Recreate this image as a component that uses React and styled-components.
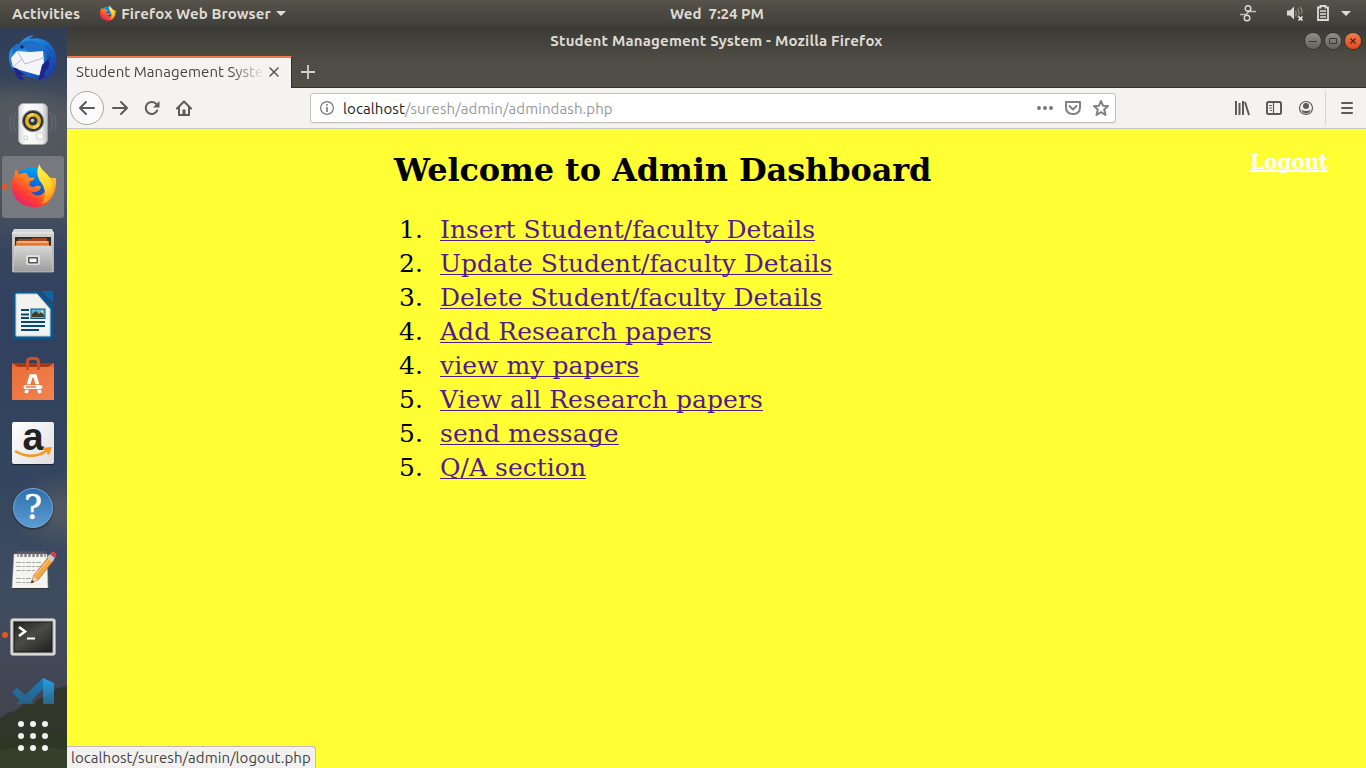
import React from 'react';
import styled, { createGlobalStyle } from 'styled-components';

const Global = createGlobalStyle`
  * { box-sizing: border-box; }
  body { margin: 0; overflow: hidden; }
`;
const ui = '"Ubuntu", "Noto Sans", "Open Sans", sans-serif';

const Desktop = styled.div`
  width: 1366px; height: 768px; display: flex; flex-direction: column;
  overflow: hidden; font-family: ${ui};
`;
const TopBar = styled.header`
  height: 27px; flex: none; display: grid; grid-template-columns: 1fr auto 1fr;
  align-items: center; padding: 0 15px 0 12px; color: #dfdbd2;
  background: linear-gradient(#57534a, #3f3e39);
`;
const BarGroup = styled.div`
  display: flex; align-items: center; justify-content: ${p => p.$end ? 'flex-end' : 'flex-start'};
  padding-bottom: ${p => p.$end ? 1 : 0}px;
`;
const Label = styled.span`
  font-size: ${p => p.$size || 15}px; font-weight: ${p => p.$bold ? 700 : 400};
  letter-spacing: ${p => p.$track || 0}px; color: ${p => p.$color || '#dfdbd2'};
  line-height: 20px; white-space: pre; display: block; margin: 0 ${p => p.$right || 0}px 0 ${p => p.$left || 0}px;
`;
const Icon = styled.svg`
  display: block; flex: none; width: ${p => p.$w || 16}px; height: ${p => p.$h || p.$w || 16}px;
  margin-left: ${p => p.$left || 0}px; overflow: visible;
`;
const Workspace = styled.div`flex: 1; display: flex; min-height: 0;`;
const Dock = styled.nav`
  width: 67px; flex: none; display: flex; flex-direction: column; position: relative;
  background:
    radial-gradient(ellipse 75px 38px at 15px 95px, #53595f 0 45%, #53595f00),
    radial-gradient(ellipse 50px 40px at 62px 485px, #4f5761 0 20%, #4f576100),
    linear-gradient(#303e58 0, #35425a 45px, #51575d 90px, #50575e 160px, #35445f 225px, #31415e 300px, #34455f 450px, #3e4c60 560px, #42495a 620px, #42444f 680px, #3e4249 741px);
`;
const Hill = styled.svg`position: absolute; left: 0; bottom: 0; width: 67px; height: 82px;`;
const DockItem = styled.div`
  height: ${p => p.$h || 64}px; flex: none; display: flex; align-items: center; justify-content: center;
  position: relative; overflow: ${p => p.$clip ? 'hidden' : 'visible'}; padding: ${p => p.$drop || 0}px 1px 0 0;
`;
const ActiveTile = styled.div`
  width: 62px; height: 62px; border-radius: 3px; background: #767a7e; position: absolute; left: 2px; top: 1px;
`;
const RunningDot = styled.i`
  position: absolute; left: 2px; top: calc(50% - 3px); width: 6px; height: 6px; border-radius: 50%; background: #e95420;
`;
const Art = styled.svg`display: block; width: 50px; height: 50px; position: relative; overflow: visible;`;

const Browser = styled.main`flex: 1; min-width: 0; display: flex; flex-direction: column; position: relative; background: #ffff33;`;
const TitleBar = styled.div`
  height: 29px; flex: none; display: grid; grid-template-columns: 1fr auto 1fr; align-items: center;
  padding: 0 5px 1px 5px; background: linear-gradient(#3b3a36, #4c4a43);
`;
const WinButtons = styled.div`display: flex; justify-content: flex-end; gap: 4px;`;
const WinButton = styled.div`
  width: 16px; height: 16px; border-radius: 50%; display: grid; place-items: center;
  background: ${p => p.$close ? 'linear-gradient(#f37a52, #df4a18)' : 'linear-gradient(#908e88, #64625b)'};
  box-shadow: 0 0 0 1px #35342f;
`;
const TabStrip = styled.div`
  height: 32px; flex: none; display: flex; background: linear-gradient(#4c4a43, #504d46 6px);
`;
const Tab = styled.div`
  width: 225px; border-right: 1px solid #2e2d29; border-top: 2px solid #f07746; background: #f4f3f2;
  display: flex; align-items: center; padding: 0 0 2px 9px;
`;
const TabTitle = styled.div`
  width: 188px; overflow: hidden; -webkit-mask-image: linear-gradient(90deg, #000 155px, transparent 188px);
  mask-image: linear-gradient(90deg, #000 155px, transparent 188px);
`;
const StripRest = styled.div`flex: 1; display: flex; align-items: center; padding-left: 9px; border-bottom: 1px solid #33322e;`;
const Toolbar = styled.div`
  height: 41px; flex: none; background: #f4f3f2; border-bottom: 1px solid #c6c4c1;
  display: flex; align-items: center; padding-left: 3px;
`;
const BackButton = styled.div`
  width: 34px; height: 34px; border-radius: 50%; border: 1px solid #aaa8a5; background: #fbfbfb;
  display: grid; place-items: center;
`;
const UrlBar = styled.div`
  width: 806px; height: 30px; margin-left: 118px; border: 1px solid #c4c1bd; border-radius: 3px; background: #fff;
  display: flex; align-items: center; padding-left: 8px; box-shadow: 0 1px 1px #0000000d;
`;
const UrlText = styled.div`flex: 1; display: flex; margin-left: 8px; padding-top: 1px;`;
const Divider = styled.div`width: 1px; height: 34px; background: #d6d4d1; margin-left: 11px;`;

const Page = styled.section`
  flex: 1; background: #ffff33; position: relative; font-family: "DejaVu Serif", serif; padding: 21px 38px 0 327px;
  display: flex; justify-content: space-between; align-items: flex-start;
`;
const Heading = styled.h1`margin: 0; font-size: 32px; line-height: 40px; font-weight: 700; letter-spacing: -0.12px; color: #000; white-space: nowrap;`;
const Menu = styled.ol`list-style: none; margin: 23px 0 0; padding: 0 0 0 5px; font-size: 25px;`;
const MenuRow = styled.li`height: 34px; line-height: 34px; display: flex; color: #000;`;
const MenuNumber = styled.span`width: 41px;`;
const VisitedLink = styled.a`
  color: #551a8b; text-decoration: underline; text-decoration-thickness: 1px; text-underline-offset: 2px;
  text-decoration-skip-ink: none; white-space: nowrap; letter-spacing: ${p => p.$track || 0}px;
`;
const Logout = styled.a`
  color: #fff; font-weight: 700; font-size: 20px; line-height: 24px; letter-spacing: -0.1px;
  text-decoration: underline; text-decoration-skip-ink: none;
`;
const Status = styled.div`
  position: absolute; left: 0; bottom: 0; width: 249px; height: 22px; background: #f2f1f0; padding: 1px 0 0 4px;
  border: solid #bdbbc0; border-width: 1px 1px 0 0; border-top-right-radius: 4px;
`;

const FirefoxShape = () => (
  <>
    <defs>
      <linearGradient id="ffo" x1=".9" y1="0" x2=".1" y2="1"><stop offset="0" stopColor="#ffd43b" /><stop offset=".4" stopColor="#ff8a1e" /><stop offset=".7" stopColor="#ff3b35" /><stop offset="1" stopColor="#d9148c" /></linearGradient>
      <linearGradient id="ffy" x1=".3" y1="0" x2=".6" y2="1"><stop offset="0" stopColor="#fff04a" /><stop offset=".6" stopColor="#ffd42b" /><stop offset="1" stopColor="#ff8c1f" /></linearGradient>
      <linearGradient id="ffb" x1=".6" y1="0" x2=".4" y2="1"><stop offset="0" stopColor="#00a4f4" /><stop offset=".5" stopColor="#0966dc" /><stop offset="1" stopColor="#373083" /></linearGradient>
    </defs>
    <circle cx="25" cy="24" r="19.500" fill="url(#ffb)" />
    <path d="M8 6c0 3 1 5 3 6 3-2 6-2 8-1 0 2 1 4 3 4h4c1 1 0 3-4 4l-1 4c2 2 4 3 7 1 3-1 6 0 5 2-2 4-6 5-10 4 3 4 8 5 12 2 6-4 7-10 5-17l9 1c1 17-8 30-21 30C11 46 3 35 3 24c0-7 1-9 3-11 0-3 0-5 2-7z" fill="url(#ffo)" />
    <path d="M32 1c0 4 3 6 7 10 8 8 9 17 5 24-3 5-7 7-10 7 5-7 4-15 0-21-5-6-6-14-2-20z" fill="url(#ffy)" />
  </>
);

const Thunderbird = () => (
  <Art viewBox="0 0 50 50">
    <defs><linearGradient id="tb" x1="0" y1="0" x2="1" y2="1"><stop offset="0" stopColor="#39a8e9" /><stop offset=".5" stopColor="#1672d4" /><stop offset="1" stopColor="#202a8c" /></linearGradient></defs>
    <path d="M11 10C16 4 20 2 26 1l-5 4c9-2 17 0 22 6 4 6 6 11 5 19-1 7-5 13-12 17l1-4-8 2L8 40C2 34-1 24 2 17c2-4 5-6 9-7z" fill="url(#tb)" />
    <path d="M11 10c5-4 12-5 19-1 8 5 11 12 7 22l-5-2 2-10-13-2-6-4-6 3-4 4c-2-3-1-6 3-10z" fill="#1d6fc8" />
    <path d="M3 24l6-7 13 1 13-1 1 12-3 13L5 34z" fill="#f4f5f8" /><path d="M9 17l8 13 18-6M5 33l9-8" fill="none" stroke="#b7bdc8" />
    <path d="M4 33l4 8c1 3 4 5 8 5l-3-5 5 0-10-7zM34 31l8-8-1 9-5 8 1 3-7 4z" fill="#21268a" />
    <circle cx="14" cy="13" r="1.8" fill="#102a52" />
    <path d="M37 11l8 9m-8-4 8 10m-6-4 5 11" stroke="#0f51af" fill="none" />
  </Art>
);
const Rhythmbox = () => (
  <Art viewBox="0 0 50 50">
    <defs><linearGradient id="spk"><stop stopColor="#d5d6d6" /><stop offset=".25" stopColor="#fff" /><stop offset=".8" stopColor="#eee" /><stop offset="1" stopColor="#bbb" /></linearGradient></defs>
    <path d="M8 13q-5 10 0 20M4 15q-4 8 0 17M42 13q5 10 0 20M46 15q4 8 0 17" stroke="#6383a4" strokeOpacity=".5" fill="none" />
    <rect x="10.500" y="4.500" width="29" height="41" rx="5" fill="url(#spk)" stroke="#aaa" strokeWidth=".6" />
    <circle cx="25" cy="22" r="11" fill="#777" /><circle cx="25" cy="22" r="10" fill="#292b2e" /><circle cx="25" cy="22" r="8" fill="#dfb41c" />
    <path d="M25 22L19 17a8 8 0 0 1 7-3zm0 0 7 4a8 8 0 0 1-7 4z" fill="#f3d453" /><circle cx="25" cy="22" r="4.500" fill="#333940" /><circle cx="24.500" cy="21.500" r="1.800" fill="#c4c8cb" />
    <circle cx="32" cy="37" r="3.500" fill="#fff" stroke="#ccc" /><rect x="16" y="37" width="3.500" height="3.500" fill="none" stroke="#d2d2d2" />
  </Art>
);
const Files = () => (
  <Art viewBox="0 0 50 50">
    <defs><linearGradient id="cab" x2="0" y2="1"><stop stopColor="#d8d8d6" /><stop offset="1" stopColor="#9b9c9b" /></linearGradient></defs>
    <path d="M6 3h38l2 4v39H4V7z" fill="url(#cab)" /><path d="M4 7h42" stroke="#eee" />
    <rect x="7" y="11" width="36" height="10" fill="#302d2b" /><path d="M10 13h13l1-1h15v9H10z" fill="#99481f" /><path d="M8 15h33v6H8z" fill="#e87733" /><path d="M9 16h31" stroke="#ffe1bd" />
    <path d="M7 20h36l2 26H5z" fill="url(#cab)" stroke="#dddddb" strokeWidth=".6" /><rect x="18" y="29" width="14" height="10" rx="2" fill="#dfdfdf" /><rect x="20" y="31" width="10" height="6.500" rx="1" fill="#555" /><rect x="21.500" y="32.500" width="7" height="3.500" fill="#f6f6f6" />
  </Art>
);
const Writer = () => (
  <Art viewBox="0 0 50 50">
    <path d="M6 1h24l15 15v31q0 2-2 2H7q-2 0-2-2V3q0-2 1-2z" fill="#065a91" /><path d="M33 1h12v12z" fill="#0a65a5" /><path d="M8 4h21l13 15v27H8z" fill="#f2f2f1" stroke="#ccc" />
    <path d="M13 20h8M13 24.500h8M13 28h8M13 32h24M13 36h24M13 40h18" stroke="#064a78" strokeWidth="1.8" /><rect x="23" y="19" width="14" height="9.500" fill="#58b7e5" stroke="#075588" /><path d="M24 27v-3l4-3 3 3 2-2 3 3v2z" fill="#443b2b" /><circle cx="34" cy="21.500" r="1.300" fill="#ffd43b" />
  </Art>
);
const Software = () => (
  <Art viewBox="0 0 50 50">
    <defs><linearGradient id="bag" x2="1" y2="1"><stop stopColor="#ec6d38" /><stop offset="1" stopColor="#f08551" /></linearGradient></defs>
    <path d="M4 9h42v4H4z" fill="#a63a15" /><path d="M4 9l6 4H4zm42 0-6 4h6z" fill="#e96531" /><rect x="4" y="13" width="42" height="33" fill="url(#bag)" />
    <path d="M19.500 16V8q0-3.500 3.500-3.500h4q3.500 0 3.500 3.500v8" fill="none" stroke="#cc5028" strokeWidth="3" />
    <path d="M18 39l5-17h4l5 17" fill="none" stroke="#fff" strokeWidth="3.600" /><path d="M16 33h18" stroke="#ed703b" strokeWidth="5.500" /><path d="M17.500 33h15" stroke="#fff" strokeWidth="4" strokeLinecap="round" /><path d="M18 33h10" stroke="#ed703b" strokeWidth="1.500" />
  </Art>
);
const AmazonTile = styled.div`
  width: 42px; height: 42px; border-radius: 2px; background: linear-gradient(135deg, #fff, #dedede); position: relative;
  color: #222; font: 700 38px/30px "Liberation Sans", sans-serif; text-align: center; box-shadow: 0 1px 1px #0008;
`;
const Smile = styled.svg`position: absolute; inset: 0; width: 42px; height: 42px;`;
const HelpDisc = styled.div`
  width: 40px; height: 40px; border-radius: 50%; border: 1.5px solid #73a9d8;
  background: linear-gradient(#2d70b2, #5d9bd1); color: #fff; text-align: center; font: 400 33px/37px "DejaVu Serif", serif;
  -webkit-text-stroke: 0.6px #fff; box-shadow: 0 1px 2px #0008;
`;
const Notepad = () => (
  <Art viewBox="0 0 50 50">
    <path d="M6 7h33l1 35H4z" fill="#f4f4f0" stroke="#aaa" strokeWidth=".5" /><path d="M4 41h37v1.500H4z" fill="#343431" />
    {[10, 14, 18, 22, 26, 30, 34].map(x => <path key={x} d={`M${x} 10V6q2-3 3 0v4`} fill="none" stroke="#656565" strokeWidth="1.1" />)}
    <path d="M8 15.500h26M8 19.500h26M8 23.500h20M8 31.500h16M8 35.500h18" stroke="#aaa" strokeWidth="1" strokeDasharray="5 1 3 1" />
    <path d="M23 36l3-8L42 8l4 5-16 20z" fill="#f5a744" stroke="#a5672b" strokeWidth=".7" /><path d="M27 28l15-17" stroke="#ffd28d" /><path d="M23 36l3-7 4 4z" fill="#edcfa0" /><path d="M23 36l1-3 2 2z" fill="#222" /><path d="M39 10l3-3 5 4-3 4z" fill="#ccc" /><path d="M42 7q2-4 5-1.500t0 5.500z" fill="#d93e49" />
  </Art>
);
const Terminal = () => (
  <Art viewBox="0 0 50 50">
    <defs><linearGradient id="term" x2=".8" y2="1"><stop stopColor="#222" /><stop offset=".5" stopColor="#4a4b49" /><stop offset="1" stopColor="#262626" /></linearGradient></defs>
    <g transform="translate(0 1)"><rect x="3" y="7" width="44" height="36" rx="1.500" fill="#c9c9c7" stroke="#f5f5f4" /><rect x="6" y="10" width="38" height="30" fill="url(#term)" stroke="#111" /><path d="M11 15l6 4.500-6 4.500" fill="none" stroke="#fff" strokeWidth="2.600" /><path d="M19 26.500h8" stroke="#fff" strokeWidth="2" /></g>
  </Art>
);
const CodeLogo = styled.svg`display: block; position: absolute; left: 12px; top: 11px; width: 42px; height: 26px;`;
const GridButton = styled.div`
  position: absolute; left: 18px; bottom: 17px; display: grid; grid-template-columns: repeat(3, 6px); gap: 6px; 
`;
const GridDot = styled.i`width: 6px; height: 6px; border-radius: 50%; background: #f2f2f0;`;

const stroke = { fill: 'none', stroke: '#5b5b5b', strokeWidth: 2, strokeLinecap: 'round', strokeLinejoin: 'round' };
const entries = [
  ['1.', 'Insert Student/faculty Details', 0], ['2.', 'Update Student/faculty Details', 0], ['3.', 'Delete Student/faculty Details', 0],
  ['4.', 'Add Research papers', 0.07], ['4.', 'view my papers', 0.05], ['5.', 'View all Research papers', 0.07],
  ['5.', 'send message', 0.1], ['5.', 'Q/A section', 0.03],
];

export default function App() {
  return (
    <Desktop>
      <Global />
      <TopBar>
        <BarGroup>
          <Label $bold $track={0.15}>Activities</Label>
          <Icon $w={17} $left={19} viewBox="0 0 50 50"><FirefoxShape /></Icon>
          <Label $bold $left={5} $track={0.12}>Firefox Web Browser</Label>
          <Icon $w={10} $h={5} $left={5} viewBox="0 0 10 5"><path d="M0 0h10L5 5z" fill="#dfdbd2" /></Icon>
        </BarGroup>
        <Label $bold $left={71}>Wed  7:24 PM</Label>
        <BarGroup $end>
          <Icon viewBox="0 0 16 16"><g fill="none" stroke="#dfdbd2" strokeWidth="1.4"><circle cx="8" cy="3.500" r="2.800" /><circle cx="7" cy="13" r="2.800" /><path d="M0 9.500h6l3-3h7" strokeOpacity=".8" /></g></Icon>
          <Icon $left={31} $w={17} viewBox="0 0 17 16"><path d="M0 5h3l4-4v13l-4-4H0z" fill="#dfdbd2" /><path d="M8.500 5q1.500 3 0 6M10.500 3q3 4 0 9M13 1.500q3.500 4 1 7" fill="none" stroke="#898679" strokeWidth="1.300" /><path d="M11.500 11l4 4m0-4-4 4" stroke="#eee" strokeWidth="1.600" /></Icon>
          <Icon $left={13} $w={12} $h={16} viewBox="0 0 12 16"><path d="M1 2.500h2.500V1h5v1.500H11V15H1z" fill="none" stroke="#dfdbd2" strokeWidth="1.800" /><path d="M3 6h6M3 9h6M3 12h6" stroke="#dfdbd2" strokeWidth="1.500" /></Icon>
          <Icon $left={12} $w={10} $h={5} viewBox="0 0 10 5"><path d="M0 0h10L5 5z" fill="#dfdbd2" /></Icon>
        </BarGroup>
      </TopBar>
      <Workspace>
        <Dock>
          <Hill viewBox="0 0 67 82"><path d="M0 32l8-5 7-2 9-7 10-2 11-6 10-7 12-3v82H0z" fill="#31352a" /><path d="M0 57l15-8 17 2 17-6 18 3v34H0z" fill="#2d3723" /><path d="M0 65q25-9 67-1v18H0z" fill="#344029" /></Hill>
          <DockItem><Thunderbird /></DockItem>
          <DockItem $drop={1}><Rhythmbox /></DockItem>
          <DockItem><ActiveTile /><RunningDot /><Art viewBox="-1 -1 52 52"><FirefoxShape /></Art></DockItem>
          <DockItem><Files /></DockItem>
          <DockItem><Writer /></DockItem>
          <DockItem><Software /></DockItem>
          <DockItem><AmazonTile>a<Smile viewBox="0 0 42 42"><path d="M3 29q17 10 33-1M31 27l7-.5-2 6" fill="none" stroke="#f79818" strokeWidth="2.500" /></Smile></AmazonTile></DockItem>
          <DockItem $drop={1}><HelpDisc>?</HelpDisc></DockItem>
          <DockItem $drop={1}><Notepad /></DockItem>
          <DockItem $drop={1}><RunningDot /><Terminal /></DockItem>
          <DockItem $h={37} $clip><CodeLogo viewBox="0 0 42 26"><defs><linearGradient id="vsc" x2="0" y2="1"><stop stopColor="#269ee5" /><stop offset="1" stopColor="#2384bd" stopOpacity=".65" /></linearGradient><linearGradient id="vsd" x2="0" y2="1"><stop stopColor="#167cba" /><stop offset="1" stopColor="#167cba" stopOpacity=".5" /></linearGradient></defs><path d="M0 14l5-4 18 16H11zM31 0v11L16 26H4z" fill="url(#vsd)" /><path d="M31 0l11 5v21H31z" fill="url(#vsc)" /></CodeLogo></DockItem>
          <GridButton>{Array.from({ length: 9 }, (_, i) => <GridDot key={i} />)}</GridButton>
        </Dock>
        <Browser>
          <TitleBar>
            <span />
            <Label $bold $track={0.18}>Student Management System - Mozilla Firefox</Label>
            <WinButtons>
              <WinButton><Icon $w={8} viewBox="0 0 8 8"><path d="M0 4.500h8" stroke="#3a3934" /></Icon></WinButton>
              <WinButton><Icon $w={8} viewBox="0 0 8 8"><path d="M.5 1.500h7v5h-7z" fill="none" stroke="#3a3934" /></Icon></WinButton>
              <WinButton $close><Icon $w={8} viewBox="0 0 8 8"><path d="M1.500 1.500l5 5m0-5-5 5" stroke="#4d2414" strokeWidth="1.300" /></Icon></WinButton>
            </WinButtons>
          </TitleBar>
          <TabStrip>
            <Tab>
              <TabTitle><Label $color="#454545" $track={0.06}>Student Management System</Label></TabTitle>
              <Icon $w={10} $left={5} viewBox="0 0 10 10"><path d="M1 1l8 8m0-8-8 8" {...stroke} strokeWidth="1.600" /></Icon>
            </Tab>
            <StripRest><Icon $w={14} viewBox="0 0 14 14"><path d="M7 0v14M0 7h14" stroke="#d3d1cc" strokeWidth="1.800" /></Icon></StripRest>
          </TabStrip>
          <Toolbar>
            <BackButton><Icon viewBox="0 0 16 16"><path d="M15 8H1m6-6L1 8l6 6" {...stroke} /></Icon></BackButton>
            <Icon $left={8} viewBox="0 0 16 16"><path d="M1 8h14M9 2l6 6-6 6" {...stroke} /></Icon>
            <Icon $left={16} viewBox="0 0 16 16"><path d="M13.200 10.500A6 6 0 1 1 12 3.700" {...stroke} /><path d="M15.500 1v6.500H9z" fill="#5b5b5b" /></Icon>
            <Icon $left={16} viewBox="0 0 16 16"><path d="M1 8.500l7-7 7 7M3 8v7h10V8" {...stroke} /><path d="M6.500 15V9.500h3V15" fill="#5b5b5b" /></Icon>
            <UrlBar>
              <Icon viewBox="0 0 16 16"><circle cx="8" cy="8" r="6.400" fill="none" stroke="#777" strokeWidth="1.200" /><path d="M8 7v5M8 4v1.700" stroke="#777" strokeWidth="1.600" /></Icon>
              <UrlText><Label $color="#222" $track={0.1}>localhost</Label><Label $color="#999" $track={0.1}>/suresh/admin/admindash.php</Label></UrlText>
              <Icon viewBox="0 0 16 16">{[2, 8, 14].map(x => <circle key={x} cx={x} cy="8" r="1.900" fill="#737373" />)}</Icon>
              <Icon $left={12} viewBox="0 0 16 16"><path d="M1 2h14v5q0 7-7 7T1 7zM4.500 6L8 9.500 11.500 6" {...stroke} stroke="#808080" /></Icon>
              <Icon $left={12} viewBox="0 0 16 16"><path d="M8 1l2 4.700 5 .4-3.800 3.400L12.500 15 8 12.200 3.500 15l1.300-5.500L1 6.100l5-.4z" {...stroke} stroke="#808080" /></Icon>
              <Icon $w={6} />
            </UrlBar>
            <Icon $left={118} viewBox="0 0 16 16"><path d="M2 1v14M5.500 3v12M9 1v14" stroke="#5b5b5b" strokeWidth="2" /><path d="M11 2l4 13" stroke="#5b5b5b" strokeWidth="2" /></Icon>
            <Icon $left={16} viewBox="0 0 16 16"><rect x="1" y="2" width="14" height="12" rx="1.500" {...stroke} /><path d="M7.500 2v12M3 5.500h3M3 8h3M4 10.500h2" stroke="#5b5b5b" strokeWidth="1.200" /></Icon>
            <Icon $left={16} viewBox="0 0 16 16"><circle cx="8" cy="8" r="6.500" fill="none" stroke="#5b5b5b" strokeWidth="1.200" /><circle cx="8" cy="6" r="3" fill="#5b5b5b" /><path d="M3.500 9.500q4.500 3 9 0-1 4-4.500 4t-4.500-4z" fill="#5b5b5b" /></Icon>
            <Divider />
            <Icon $left={14} $w={14} $h={14} viewBox="0 0 14 14"><path d="M2 2h10M2 7h10M2 12h10" {...stroke} /></Icon>
          </Toolbar>
          <Page>
            <div>
              <Heading>Welcome to Admin Dashboard</Heading>
              <Menu>
                {entries.map(([n, text, track]) => <MenuRow key={text}><MenuNumber>{n}</MenuNumber><VisitedLink $track={track}>{text}</VisitedLink></MenuRow>)}
              </Menu>
            </div>
            <Logout>Logout</Logout>
          </Page>
          <Status><Label $color="#444" $track={0.06}>localhost/suresh/admin/logout.php</Label></Status>
        </Browser>
      </Workspace>
    </Desktop>
  );
}
